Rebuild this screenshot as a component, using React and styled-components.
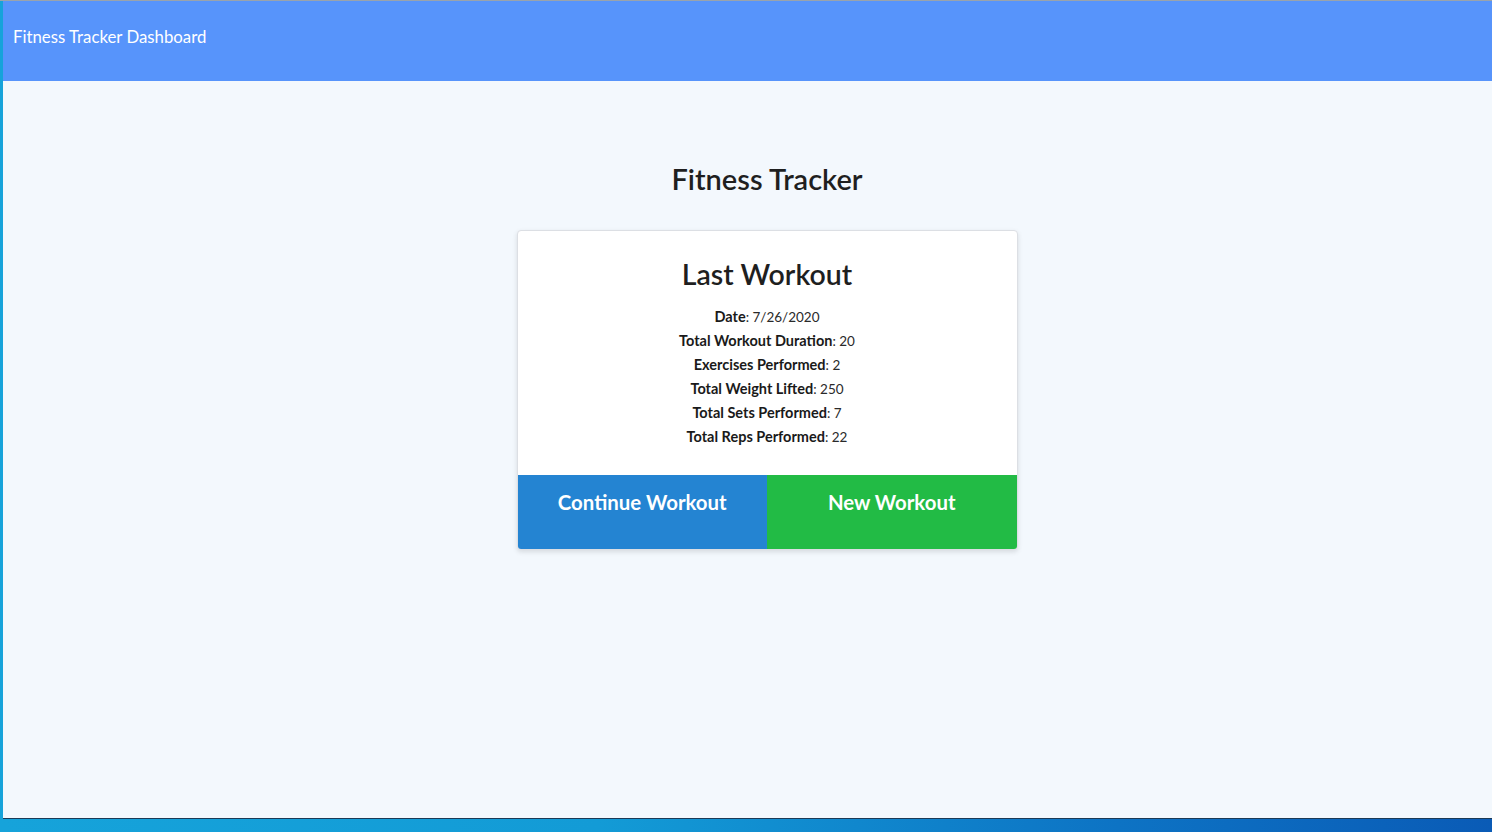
import React from "react";
import styled, { createGlobalStyle } from "styled-components";

const Global = createGlobalStyle`
  html, body { margin: 0; padding: 0; }
  body {
    width: 1492px;
    height: 832px;
    overflow: hidden;
    font-family: Lato, "Open Sans", sans-serif;
    background: linear-gradient(90deg, #16a3da 0%, #139bd6 40%, #0d73c4 75%, #0a5bb6 100%);
  }
  * { box-sizing: border-box; }
`;

const Desktop = styled.div`
  display: flex;
  padding: 1px 0 0 3px;
  height: 832px;
  overflow: hidden;
  background: linear-gradient(180deg, #9aa3ab 0, #9aa3ab 1px, transparent 1px);
`;

const Window = styled.div`
  flex: 0 0 1528px;
  width: 1528px;
  height: 817px;
  display: flex;
  flex-direction: column;
  background: #f3f8fd;
  box-shadow: 0 1px 0 #1b3a57;
`;

const Nav = styled.header`
  height: 80px;
  background: #5794fb;
  padding: 25px 10px 0;
  color: #ffffff;
  font-family: Lato, "Open Sans", sans-serif;
  font-size: 16.8px;
  line-height: 22px;
`;

const Main = styled.main`
  display: flex;
  flex-direction: column;
  align-items: center;
  padding-top: 79px;
`;

const Title = styled.h1`
  margin: 0 0 32px;
  font-size: 29px;
  line-height: 38px;
  font-weight: 600;
  color: #1f1f1f;
`;

const Card = styled.section`
  width: 501px;
  background: #ffffff;
  border: 1px solid #dcdfe4;
  border-radius: 4px;
  box-shadow: 0 2px 5px rgba(0, 0, 0, 0.12);
  overflow: hidden;
  display: flex;
  flex-direction: column;
`;

const CardBody = styled.div`
  padding: 24px 20px 26px;
  text-align: center;
`;

const CardTitle = styled.h2`
  margin: 0 0 12px;
  font-size: 28.5px;
  line-height: 38px;
  font-weight: 600;
  color: #1f1f1f;
`;

const Stat = styled.div`
  font-size: 13.5px;
  line-height: 24px;
  color: #2a2a2a;
  font-weight: 400;
  b { font-weight: 700; font-size: 14.5px; color: #1a1a1a; }
`;

const Actions = styled.div`
  display: grid;
  grid-template-columns: 1fr 1fr;
`;

const ActionButton = styled.button`
  border: 0;
  height: 74px;
  padding: 13px 0 0;
  display: flex;
  justify-content: center;
  align-items: flex-start;
  background: ${(p) => p.$bg};
  color: #ffffff;
  font-family: Lato, sans-serif;
  font-size: 20.4px;
  line-height: 28px;
  font-weight: 700;
  cursor: pointer;
`;

const stats = [
  ["Date", "7/26/2020"],
  ["Total Workout Duration", "20"],
  ["Exercises Performed", "2"],
  ["Total Weight Lifted", "250"],
  ["Total Sets Performed", "7"],
  ["Total Reps Performed", "22"],
];

export default function App() {
  return (
    <>
      <Global />
      <Desktop>
        <Window>
          <Nav>Fitness Tracker Dashboard</Nav>
          <Main>
            <Title>Fitness Tracker</Title>
            <Card>
              <CardBody>
                <CardTitle>Last Workout</CardTitle>
                {stats.map(([k, v]) => (
                  <Stat key={k}>
                    <b>{k}</b>: {v}
                  </Stat>
                ))}
              </CardBody>
              <Actions>
                <ActionButton $bg="#2484d2">Continue Workout</ActionButton>
                <ActionButton $bg="#22bb45">New Workout</ActionButton>
              </Actions>
            </Card>
          </Main>
        </Window>
      </Desktop>
    </>
  );
}
